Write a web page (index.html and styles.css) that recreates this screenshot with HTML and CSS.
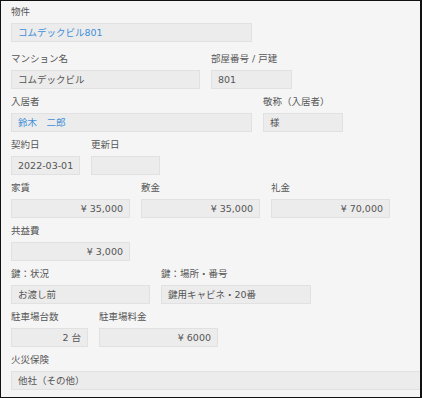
FILE: index.html
```html
<!DOCTYPE html>
<html lang="ja">
<head>
    <meta charset="UTF-8">
    <meta name="viewport" content="width=device-width, initial-scale=1.0">
    <title>物件詳細</title>
    <link rel="stylesheet" href="styles.css">
</head>
<body>
    <div class="panel">
        <div class="row row-first">
            <div class="field">
                <div class="label">物件</div>
                <div class="value link w241">コムデックビル801</div>
            </div>
        </div>
        <div class="row">
            <div class="field">
                <div class="label">マンション名</div>
                <div class="value w189">コムデックビル</div>
            </div>
            <div class="field">
                <div class="label">部屋番号 / 戸建</div>
                <div class="value w81">801</div>
            </div>
        </div>
        <div class="row">
            <div class="field">
                <div class="label">入居者</div>
                <div class="value link w241">鈴木　二郎</div>
            </div>
            <div class="field">
                <div class="label">敬称（入居者）</div>
                <div class="value w80">様</div>
            </div>
        </div>
        <div class="row">
            <div class="field">
                <div class="label">契約日</div>
                <div class="value w69">2022-03-01</div>
            </div>
            <div class="field">
                <div class="label">更新日</div>
                <div class="value w69"></div>
            </div>
        </div>
        <div class="row">
            <div class="field">
                <div class="label">家賃</div>
                <div class="value num w119">¥ 35,000</div>
            </div>
            <div class="field">
                <div class="label">敷金</div>
                <div class="value num w119">¥ 35,000</div>
            </div>
            <div class="field">
                <div class="label">礼金</div>
                <div class="value num w119">¥ 70,000</div>
            </div>
        </div>
        <div class="row">
            <div class="field">
                <div class="label">共益費</div>
                <div class="value num w119">¥ 3,000</div>
            </div>
        </div>
        <div class="row">
            <div class="field">
                <div class="label">鍵：状況</div>
                <div class="value w139">お渡し前</div>
            </div>
            <div class="field">
                <div class="label">鍵：場所・番号</div>
                <div class="value w150">鍵用キャビネ・20番</div>
            </div>
        </div>
        <div class="row">
            <div class="field">
                <div class="label">駐車場台数</div>
                <div class="value num w77">2 台</div>
            </div>
            <div class="field">
                <div class="label">駐車場料金</div>
                <div class="value num w119">¥ 6000</div>
            </div>
        </div>
        <div class="row">
            <div class="field">
                <div class="label">火災保険</div>
                <div class="value w440">他社（その他）</div>
            </div>
        </div>
    </div>
</body>
</html>
```

FILE: styles.css
```css
body {
    margin: 0;
    font-family: "DejaVu Sans", "Noto Sans CJK JP", sans-serif;
    font-size: 9.5px;
    color: #555;
}
.panel {
    box-sizing: border-box;
    width: 422px;
    height: 398px;
    overflow: hidden;
    background: #f5f5f5;
    border-top: 1px solid #111;
    border-left: 1px solid #111;
    border-right: 2px solid #111;
    border-bottom: 1px solid #111;
    padding: 4px 0 0 10px;
}
.row {
    display: flex;
    gap: 11px;
    margin-bottom: 6px;
}
.row-first {
    margin-bottom: 10px;
}
.label {
    height: 14px;
    line-height: 14px;
    margin-bottom: 4px;
    color: #555;
    white-space: nowrap;
}
.value {
    box-sizing: border-box;
    height: 19px;
    line-height: 17px;
    padding: 0 6px;
    background: #ececec;
    border: 1px solid #e1e1e1;
    color: #555;
    white-space: nowrap;
}
.value.link {
    color: #3f8fd8;
}
.value.num {
    text-align: right;
}
.w69 { width: 69px; }
.w77 { width: 77px; }
.w80 { width: 80px; }
.w81 { width: 81px; }
.w119 { width: 119px; }
.w139 { width: 139px; }
.w150 { width: 150px; }
.w189 { width: 189px; }
.w241 { width: 241px; }
.w440 { width: 440px; }
```
